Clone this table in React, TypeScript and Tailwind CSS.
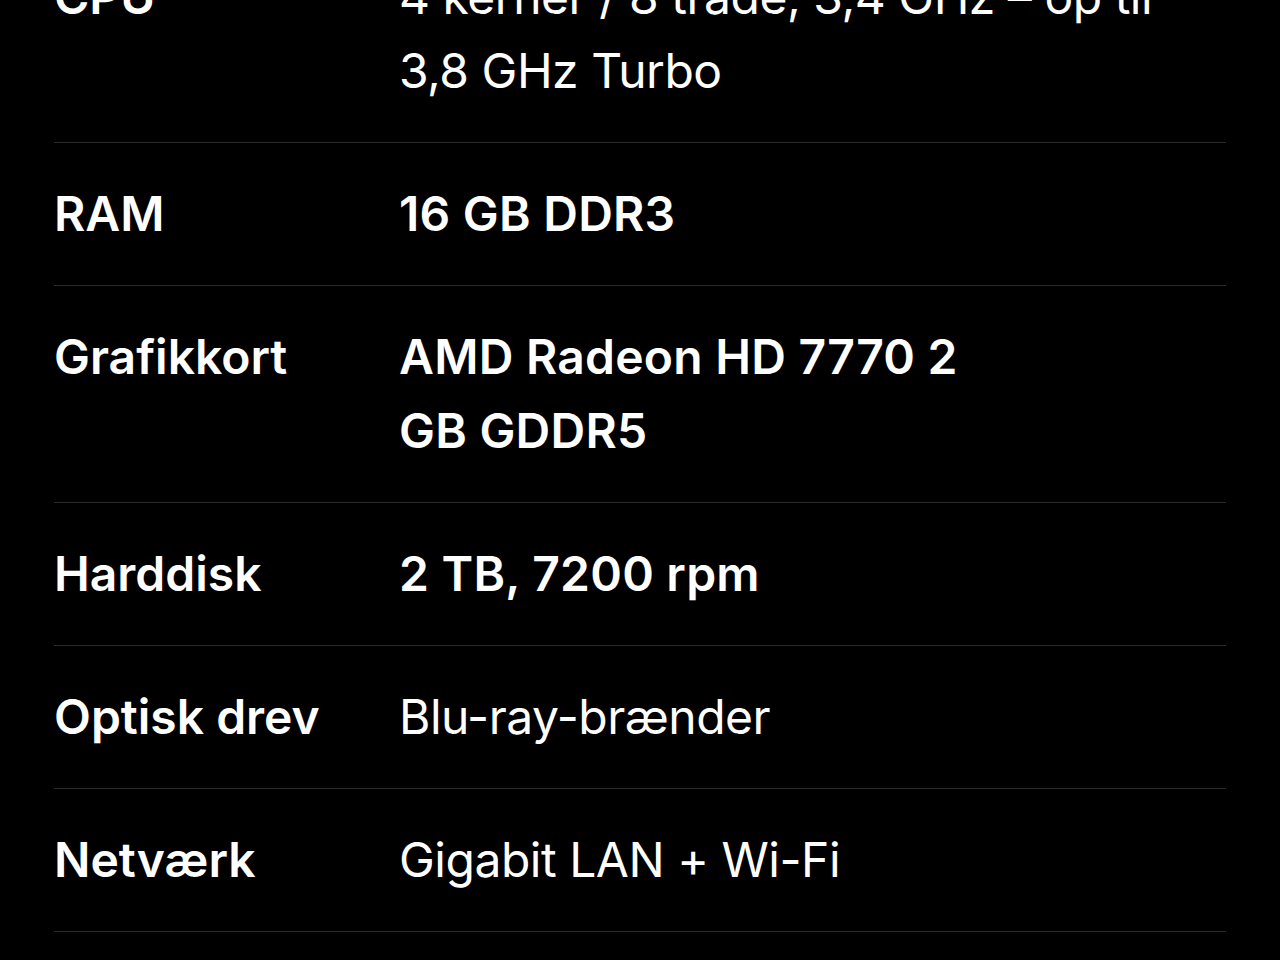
import React from 'react';

type Spec = { label: string; lines: string[]; strong?: boolean };

const specs: Spec[] = [
  { label: 'CPU', lines: ['4 kerner / 8 tråde, 3,4 GHz – op til', '3,8 GHz Turbo'] },
  { label: 'RAM', lines: ['16 GB DDR3'], strong: true },
  { label: 'Grafikkort', lines: ['AMD Radeon HD 7770 2', 'GB GDDR5'], strong: true },
  { label: 'Harddisk', lines: ['2 TB, 7200 rpm'], strong: true },
  { label: 'Optisk drev', lines: ['Blu-ray-brænder'] },
  { label: 'Netværk', lines: ['Gigabit LAN + Wi-Fi'] },
];

const App: React.FC = () => {
  return (
    <div className="bg-black min-h-screen h-[960px] overflow-hidden text-white font-['Inter','Noto_Sans',sans-serif]">
      <div className="px-[54px] -mt-[74px]">
        {specs.map((s) => (
          <div key={s.label} className="flex py-[34px] border-b border-[#2a2a2c] text-[48px] leading-[74px]">
            <div className="w-[345px] shrink-0 font-semibold">{s.label}</div>
            <div className={s.strong ? 'font-semibold tracking-[0.005em]' : 'font-normal tracking-[-0.01em]'}>
              {s.lines.map((l) => (
                <div key={l}>{l}</div>
              ))}
            </div>
          </div>
        ))}
      </div>
    </div>
  );
};

export default App;
